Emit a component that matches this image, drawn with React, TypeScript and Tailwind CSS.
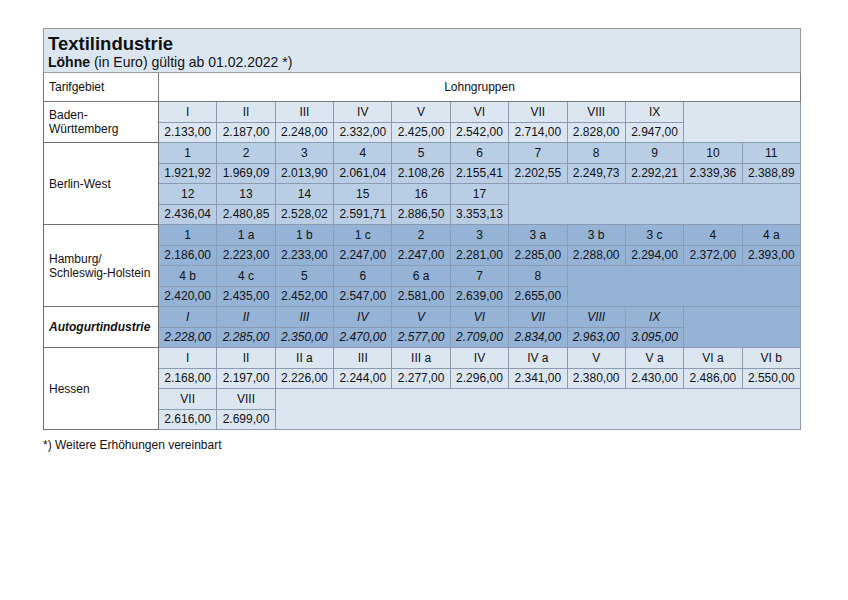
import React from 'react';

type Row = { labels: string[]; values: string[] };

const regions: { name: React.ReactNode; bg: string; italic?: boolean; rows: Row[] }[] = [
  {
    name: (
      <>
        Baden-
        <br />
        Württemberg
      </>
    ),
    bg: 'bg-[#dce6f1]',
    rows: [
      {
        labels: ['I', 'II', 'III', 'IV', 'V', 'VI', 'VII', 'VIII', 'IX'],
        values: ['2.133,00', '2.187,00', '2.248,00', '2.332,00', '2.425,00', '2.542,00', '2.714,00', '2.828,00', '2.947,00'],
      },
    ],
  },
  {
    name: 'Berlin-West',
    bg: 'bg-[#b9cde5]',
    rows: [
      {
        labels: ['1', '2', '3', '4', '5', '6', '7', '8', '9', '10', '11'],
        values: ['1.921,92', '1.969,09', '2.013,90', '2.061,04', '2.108,26', '2.155,41', '2.202,55', '2.249,73', '2.292,21', '2.339,36', '2.388,89'],
      },
      {
        labels: ['12', '13', '14', '15', '16', '17'],
        values: ['2.436,04', '2.480,85', '2.528,02', '2.591,71', '2.886,50', '3.353,13'],
      },
    ],
  },
  {
    name: (
      <>
        Hamburg/
        <br />
        Schleswig-Holstein
      </>
    ),
    bg: 'bg-[#95b3d7]',
    rows: [
      {
        labels: ['1', '1 a', '1 b', '1 c', '2', '3', '3 a', '3 b', '3 c', '4', '4 a'],
        values: ['2.186,00', '2.223,00', '2.233,00', '2.247,00', '2.247,00', '2.281,00', '2.285,00', '2.288,00', '2.294,00', '2.372,00', '2.393,00'],
      },
      {
        labels: ['4 b', '4 c', '5', '6', '6 a', '7', '8'],
        values: ['2.420,00', '2.435,00', '2.452,00', '2.547,00', '2.581,00', '2.639,00', '2.655,00'],
      },
    ],
  },
  {
    name: <span className="font-bold italic">Autogurtindustrie</span>,
    bg: 'bg-[#95b3d7]',
    italic: true,
    rows: [
      {
        labels: ['I', 'II', 'III', 'IV', 'V', 'VI', 'VII', 'VIII', 'IX'],
        values: ['2.228,00', '2.285,00', '2.350,00', '2.470,00', '2.577,00', '2.709,00', '2.834,00', '2.963,00', '3.095,00'],
      },
    ],
  },
  {
    name: 'Hessen',
    bg: 'bg-[#dce6f1]',
    rows: [
      {
        labels: ['I', 'II', 'II a', 'III', 'III a', 'IV', 'IV a', 'V', 'V a', 'VI a', 'VI b'],
        values: ['2.168,00', '2.197,00', '2.226,00', '2.244,00', '2.277,00', '2.296,00', '2.341,00', '2.380,00', '2.430,00', '2.486,00', '2.550,00'],
      },
      {
        labels: ['VII', 'VIII'],
        values: ['2.616,00', '2.699,00'],
      },
    ],
  },
];

const cell = 'border border-[#8a9bb3] text-center h-[20.5px] p-0 leading-none';

export default function App() {
  return (
    <div className="w-[848px] h-[600px] bg-white pt-[28px] pl-[43px] text-[12px] text-[#111]" style={{ fontFamily: '"Liberation Sans", Arial, sans-serif' }}>
      <table className="border-collapse w-[758px] table-fixed">
        <colgroup>
          <col className="w-[115px]" />
          {Array.from({ length: 11 }).map((_, i) => (
            <col key={i} />
          ))}
        </colgroup>
        <tbody>
          <tr>
            <td colSpan={12} className="border border-[#9a9a9a] bg-[#dce6f1] h-[44px] px-[4px] align-top pt-[5px]">
              <div className="text-[18.5px] font-bold leading-[20px]">Textilindustrie</div>
              <div className="text-[14px] leading-[16px]">
                <span className="font-bold">Löhne</span> (in Euro) gültig ab 01.02.2022 *)
              </div>
            </td>
          </tr>
          <tr>
            <td className="border border-[#7a7a7a] h-[29px] px-[5px]">Tarifgebiet</td>
            <td colSpan={11} className="border border-[#7a7a7a] text-center">Lohngruppen</td>
          </tr>
          {regions.map((r, ri) => {
            const total = r.rows.length * 2;
            return r.rows.flatMap((row, i) => {
              const missing = 11 - row.labels.length;
              const it = r.italic ? 'italic' : '';
              return [
                <tr key={`${ri}-${i}-l`} className={r.bg}>
                  {i === 0 && (
                    <td rowSpan={total} className="border border-[#6f6f6f] bg-white px-[5px] text-left leading-[14px]">
                      {r.name}
                    </td>
                  )}
                  {row.labels.map((l, k) => (
                    <td key={k} className={`${cell} ${it}`}>
                      {l}
                    </td>
                  ))}
                  {missing > 0 && <td colSpan={missing} rowSpan={2} className="border border-[#8a9bb3]" />}
                </tr>,
                <tr key={`${ri}-${i}-v`} className={r.bg}>
                  {row.values.map((v, k) => (
                    <td key={k} className={`${cell} ${it}`}>
                      {v}
                    </td>
                  ))}
                </tr>,
              ];
            });
          })}
        </tbody>
      </table>
      <div className="mt-[6px] text-[12px]">*) Weitere Erhöhungen vereinbart</div>
    </div>
  );
}
